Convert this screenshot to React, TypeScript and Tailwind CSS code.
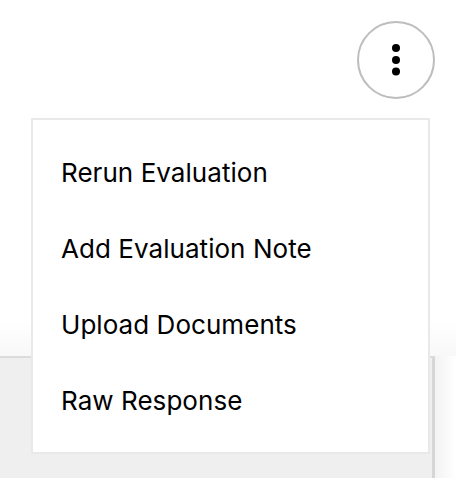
import { useState } from 'react'

const items = ['Rerun Evaluation', 'Add Evaluation Note', 'Upload Documents', 'Raw Response']

function DotsIcon() {
    return (
        <svg width="10" height="34" viewBox="0 0 10 34" fill="currentColor">
            <circle cx="5" cy="5" r="4" />
            <circle cx="5" cy="17" r="4" />
            <circle cx="5" cy="28.5" r="4" />
        </svg>
    )
}

export default function App() {
    const [open, setOpen] = useState(true)

    return (
        <div
            className="relative h-[478px] w-[456px] overflow-hidden bg-white"
            style={{ fontFamily: 'Inter, "Liberation Sans", sans-serif' }}
        >
            <div className="flex h-[356px] justify-end bg-gradient-to-b from-white from-[90%] to-[#f8f8f8] pr-[21px] pt-[21px]">
                <button
                    onClick={() => setOpen(!open)}
                    className="flex h-[78px] w-[78px] items-center justify-center rounded-full border-2 border-[#bdbdbd] bg-white text-black"
                >
                    <DotsIcon />
                </button>
            </div>

            <div className="flex">
                <div className="h-[122px] w-[435px] border-t-2 border-r-[3px] border-t-[#dcdcdc] border-r-[#d6d6d6] bg-[#efefef]" />
                <div className="h-[122px] flex-1 bg-gradient-to-r from-[#f3f3f3] to-white" />
            </div>

            {open && (
                <div className="absolute left-[31px] top-[118px] w-[399px] border-2 border-[#e9e9e9] bg-white pt-[15px] pb-[13px]">
                    {items.map((item) => (
                        <div
                            key={item}
                            className="flex h-[76px] items-center px-[28px] text-[26px] leading-none tracking-[0.05px] text-black"
                        >
                            {item}
                        </div>
                    ))}
                </div>
            )}
        </div>
    )
}
